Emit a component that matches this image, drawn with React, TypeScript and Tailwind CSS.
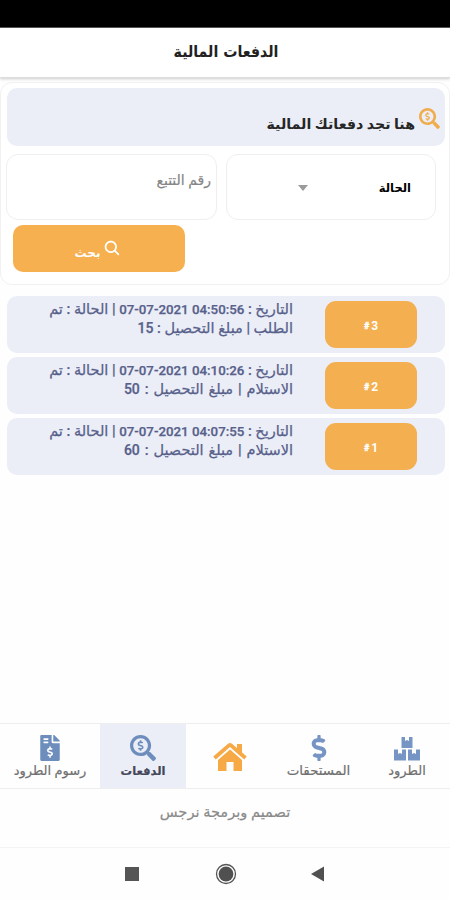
import React from "react";
import { FaDollarSign, FaFileInvoiceDollar, FaSearchDollar } from "react-icons/fa";
import { IoSearch } from "react-icons/io5";

const payments = [
  { id: 3, date: "07-07-2021 04:50:56", status: "الطلب", amount: 15, spacing: "" },
  { id: 2, date: "07-07-2021 04:10:26", status: "الاستلام", amount: 50, spacing: "[word-spacing:1.3px]" },
  { id: 1, date: "07-07-2021 04:07:55", status: "الاستلام", amount: 60, spacing: "[word-spacing:1.3px]" },
];

function BoxesIcon({ className }: { className: string }) {
  return (
    <svg className={className} viewBox="0 0 26 24" fill="currentColor">
      <path d="M7.500 0H11v4l2-1 2 1V0h3.500v11h-11z" />
      <path d="M0 12.500h4v4.500l2-1 2 1v-4.500h4v11H0z" />
      <path d="M14 12.500h4v4.500l2-1 2 1v-4.500h4v11H14z" />
    </svg>
  );
}

function HouseIcon({ className }: { className: string }) {
  return (
    <svg className={className} viewBox="0 0 34 30" fill="currentColor">
      <path d="M1.500 16 16 3.400a1.500 1.500 0 0 1 2 0L32.500 16" fill="none" stroke="currentColor" strokeWidth="3.800" />
      <path d="M24 2h5v12l-5-4.500z" />
      <path d="M17 7.600 29 18V29h-8.500v-9h-7v9H5V18z" />
    </svg>
  );
}

function PaymentRow({ id, date, status, amount, spacing }: (typeof payments)[number]) {
  return (
    <div className="flex h-[57px] rounded-[10px] bg-[#ebeef7] pr-7 pt-[5px]">
      <button className="h-[47px] w-[92px] shrink-0 rounded-[11px] bg-[#f3af50] pt-[2px] text-[12px] font-bold text-white">
        <span dir="ltr"><span className="mr-[2px] align-[1px] text-[9px] [-webkit-text-stroke:0.4px]">#</span>{id}</span>
      </button>
      <div className="mr-8 w-[260px] whitespace-nowrap text-[14.5px] font-medium leading-[18px] text-[#57608a] [-webkit-text-stroke:0.25px]">
        <div>التاريخ : <span dir="ltr" className="text-[13.3px]">{date}</span> | الحالة : تم</div>
        <div className={spacing}>{status} | مبلغ التحصيل : <span className="text-[14px]">{amount}</span></div>
      </div>
    </div>
  );
}

export default function App() {
  return (
    <div dir="rtl" className="flex h-[900px] w-[450px] flex-col overflow-hidden bg-[#fefefe] font-['Roboto','DejaVu_Sans',sans-serif]">
      <div className="h-[27px] shrink-0 border-b border-[#555] bg-black box-content" />
      <header className="flex h-[50px] shrink-0 items-center justify-center border-b border-[#ddd] bg-white font-['DejaVu_Sans_Condensed',sans-serif] text-[15.75px] font-bold text-[#222] shadow-[0_1px_3px_rgba(0,0,0,0.2)]">
        <h1 className="-mt-[2px] mr-[-2px] whitespace-nowrap">الدفعات المالية</h1>
      </header>

      <section className="mt-1 h-[203px] shrink-0 rounded-[12px] border border-[#f1f1f1] bg-white px-[4px] pt-[5px]">
        <div className="flex h-[58px] w-[438px] rounded-[10px] bg-[#ebeef7] pr-[5px] pt-[20px]">
          <FaSearchDollar className="size-[21px] shrink-0 text-[#f0ad4e]" />
          <span className="mr-[4px] mt-[6px] whitespace-nowrap text-[14.2px] font-bold leading-[20px] text-[#262626]">هنا تجد دفعاتك المالية</span>
        </div>
        <div className="mr-[9px] mt-[8px] flex gap-[9px]">
          <div className="flex h-[66px] w-[210px] shrink-0 items-center justify-between rounded-[12px] border border-[#efefef] pl-[71px] pr-[24px]">
            <span className="mt-[4px] whitespace-nowrap text-[11.5px] font-bold text-black">الحالة</span>
            <span className="mt-[2px] h-0 w-0 shrink-0 border-x-[5px] border-t-[6px] border-x-transparent border-t-[#9b9b9b]" />
          </div>
          <div className="h-[66px] w-[211px] shrink-0 rounded-[12px] border border-[#efefef] pr-[5px] pt-[15px] text-[14px] leading-[20px] text-[#858585] [-webkit-text-stroke:0.2px]">
            رقم التتبع
          </div>
        </div>
        <button className="mr-[260px] mt-[5px] flex h-[47px] w-[172px] items-center justify-center gap-[3px] rounded-[10px] bg-[#f6b04f] pr-[2px] text-[12px] font-bold text-white">
          <IoSearch className="-mt-[2px] size-[18px]" />
          <span className="mt-[8px]">بحث</span>
        </button>
      </section>

      <main className="mt-[11px] flex flex-col gap-[4px] pl-[7px] pr-[5px]">
        {payments.map((p) => <PaymentRow key={p.id} {...p} />)}
      </main>

      <nav className="mt-auto flex h-[66px] shrink-0 border-y border-[#ededed] text-[13px] leading-[16px] text-[#707070] [-webkit-text-stroke:0.2px]">
        <div className="flex w-[86px] flex-col items-center pt-[13px]">
          <BoxesIcon className="h-[24px] w-[26px] text-[#7795c4]" />
          <span className="mt-[2px] whitespace-nowrap">الطرود</span>
        </div>
        <div className="flex w-[91px] flex-col items-center pt-[11px]">
          <FaDollarSign className="size-[26px] text-[#7795c4]" />
          <span className="mt-[2px] whitespace-nowrap text-[13.4px]">المستحقات</span>
        </div>
        <div className="flex w-[87px] flex-col items-center pt-[18px]">
          <HouseIcon className="h-[30px] w-[34px] text-[#f6a945]" />
        </div>
        <div className="flex w-[86px] flex-col items-center bg-[#ebeef7] pt-[11px] text-[#44475a]">
          <FaSearchDollar className="size-[26px] text-[#6d8dbd]" />
          <span className="mt-[2px] whitespace-nowrap text-[11.5px] font-bold">الدفعات</span>
        </div>
        <div className="flex w-[100px] flex-col items-center pt-[11px]">
          <FaFileInvoiceDollar className="size-[26px] text-[#6d8dbd]" />
          <span className="mt-[2px] whitespace-nowrap">رسوم الطرود</span>
        </div>
      </nav>
      <footer className="flex h-[59px] shrink-0 justify-center border-b border-[#f4f4f4] pt-[13px] text-[14.6px] leading-[20px] text-[#8a8a8a] [-webkit-text-stroke:0.2px]">
        <span className="whitespace-nowrap">تصميم وبرمجة نرجس</span>
      </footer>
      <div dir="ltr" className="flex h-[52px] shrink-0 items-center pl-[125px]">
        <span className="size-[14px] bg-[#555]" />
        <svg className="ml-[76px] size-[22px]" viewBox="0 0 22 22">
          <circle cx="11" cy="11" r="9.5" fill="none" stroke="#555" strokeWidth="1.3" />
          <circle cx="11" cy="11" r="7.4" fill="#505050" />
        </svg>
        <svg className="ml-[74px] h-[16px] w-[13px]" viewBox="0 0 13 16"><path d="M0 8 13 .5v15z" fill="#505050" /></svg>
      </div>
    </div>
  );
}
